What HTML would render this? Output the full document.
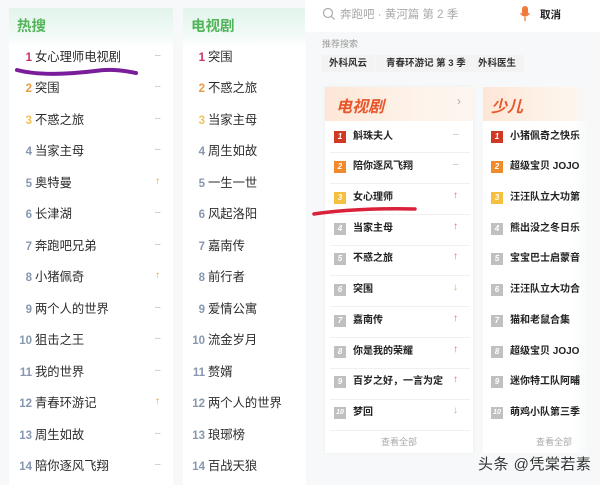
<!DOCTYPE html>
<html><head><meta charset="utf-8"><style>
*{margin:0;padding:0;box-sizing:border-box}
body{width:600px;height:485px;overflow:hidden;background:#f7f8f9;font-family:"Liberation Sans","Noto Sans CJK SC",sans-serif;position:relative}
.abs{position:absolute}
.card{position:absolute;background:#fff}
.lh{position:absolute;left:0;right:0;top:0;height:38px;background:linear-gradient(180deg,#e2f4ec,#f3faf7 75%,#fff);}
.lh span{position:absolute;left:8px;top:7px;font-size:14.5px;color:#52b45a;font-weight:bold}
.r{position:absolute;height:18px;line-height:18px;font-size:12.3px;color:#2b2b2b;white-space:nowrap}
.n{display:inline-block;width:14px;text-align:right;margin-right:3px;color:#8797b0;font-weight:bold;font-size:11.5px}
.t{position:absolute;font-size:10px;color:#bbb}
.up{color:#e0a030}
.rh{position:absolute;left:0;right:0;top:0;height:34px;background:linear-gradient(90deg,#fde6d6,#fdf3ea 60%,#fdf6ef);}
.rh span{position:absolute;left:11px;top:6px;font-size:16px;color:#e8562c;font-weight:bold;font-style:italic}
.rr{position:absolute;height:16px;line-height:16px;font-size:10px;color:#222;font-weight:bold;white-space:nowrap}
.b{position:absolute;width:12px;height:12px;top:2px;color:#fff;font-size:8px;line-height:12px;text-align:center;background:#c0c0c0}
.sep{position:absolute;height:1px;background:#f0f0f0}
.a{position:absolute;font-size:10px}
</style></head><body>

<div class="card" style="left:9px;top:8px;width:164px;height:477px">
<div class="lh"><span>热搜</span></div>
</div>
<div class="card" style="left:183px;top:8px;width:123px;height:477px">
<div class="lh"><span>电视剧</span></div>
</div>

<div class="r" style="left:18px;top:48px"><span class="n" style="color:#c8306a">1</span>女心理师电视剧</div>
<div class="r" style="left:18px;top:79px"><span class="n" style="color:#eb9a40">2</span>突围</div>
<div class="r" style="left:18px;top:111px"><span class="n" style="color:#eec257">3</span>不惑之旅</div>
<div class="r" style="left:18px;top:142px"><span class="n">4</span>当家主母</div>
<div class="r" style="left:18px;top:174px"><span class="n">5</span>奥特曼</div>
<div class="r" style="left:18px;top:205px"><span class="n">6</span>长津湖</div>
<div class="r" style="left:18px;top:237px"><span class="n">7</span>奔跑吧兄弟</div>
<div class="r" style="left:18px;top:268px"><span class="n">8</span>小猪佩奇</div>
<div class="r" style="left:18px;top:300px"><span class="n">9</span>两个人的世界</div>
<div class="r" style="left:18px;top:331px"><span class="n">10</span>狙击之王</div>
<div class="r" style="left:18px;top:363px"><span class="n">11</span>我的世界</div>
<div class="r" style="left:18px;top:394px"><span class="n">12</span>青春环游记</div>
<div class="r" style="left:18px;top:426px"><span class="n">13</span>周生如故</div>
<div class="r" style="left:18px;top:457px"><span class="n">14</span>陪你逐风飞翔</div>

<div class="t" style="left:155px;top:50px">–</div>
<div class="t" style="left:155px;top:81px">–</div>
<div class="t" style="left:155px;top:113px">–</div>
<div class="t" style="left:155px;top:144px">–</div>
<div class="t up" style="left:155px;top:176px">↑</div>
<div class="t" style="left:155px;top:207px">–</div>
<div class="t" style="left:155px;top:239px">–</div>
<div class="t up" style="left:155px;top:270px">↑</div>
<div class="t" style="left:155px;top:302px">–</div>
<div class="t" style="left:155px;top:333px">–</div>
<div class="t" style="left:155px;top:365px">–</div>
<div class="t up" style="left:155px;top:396px">↑</div>
<div class="t" style="left:155px;top:428px">–</div>
<div class="t" style="left:155px;top:459px">–</div>

<div class="r" style="left:191px;top:48px"><span class="n" style="color:#c8306a">1</span>突围</div>
<div class="r" style="left:191px;top:79px"><span class="n" style="color:#eb9a40">2</span>不惑之旅</div>
<div class="r" style="left:191px;top:111px"><span class="n" style="color:#eec257">3</span>当家主母</div>
<div class="r" style="left:191px;top:142px"><span class="n">4</span>周生如故</div>
<div class="r" style="left:191px;top:174px"><span class="n">5</span>一生一世</div>
<div class="r" style="left:191px;top:205px"><span class="n">6</span>风起洛阳</div>
<div class="r" style="left:191px;top:237px"><span class="n">7</span>嘉南传</div>
<div class="r" style="left:191px;top:268px"><span class="n">8</span>前行者</div>
<div class="r" style="left:191px;top:300px"><span class="n">9</span>爱情公寓</div>
<div class="r" style="left:191px;top:331px"><span class="n">10</span>流金岁月</div>
<div class="r" style="left:191px;top:363px"><span class="n">11</span>赘婿</div>
<div class="r" style="left:191px;top:394px"><span class="n">12</span>两个人的世界</div>
<div class="r" style="left:191px;top:426px"><span class="n">13</span>琅琊榜</div>
<div class="r" style="left:191px;top:457px"><span class="n">14</span>百战天狼</div>

<svg class="abs" style="left:0;top:0" width="310" height="100"><path d="M17 70 C40 76,70 74,95 71 C115 68,130 72,136 73" stroke="#7a1d9a" stroke-width="4" fill="none" stroke-linecap="round"/></svg>

<div class="abs" style="left:305px;top:0;width:295px;height:32px;background:#fff"></div>
<svg class="abs" style="left:322px;top:7px" width="14" height="14"><circle cx="6" cy="6" r="4.5" stroke="#aaa" stroke-width="1.2" fill="none"/><path d="M9.5 9.5 L12.5 12.5" stroke="#aaa" stroke-width="1.2"/></svg>
<div class="abs" style="left:340px;top:6px;font-size:11.5px;color:#a8a8a8">奔跑吧 · 黄河篇 第 2 季</div>
<svg class="abs" style="left:519px;top:6px" width="12" height="16"><rect x="3" y="0" width="6" height="10" rx="3" fill="#f07a3a"/><path d="M1.5 7 Q6 13 10.5 7 M6 11 V15" stroke="#f07a3a" stroke-width="1.3" fill="none"/></svg>
<div class="abs" style="left:540px;top:7px;font-size:10.5px;color:#222;font-weight:bold">取消</div>
<div class="abs" style="left:322px;top:37px;font-size:9px;color:#999">推荐搜索</div>
<div class="abs" style="left:322px;top:55px;height:17px;line-height:17px;padding:0 7px;background:#f3f3f3;font-size:9.5px;font-weight:bold;color:#333">外科风云</div>
<div class="abs" style="left:375px;top:55px;height:17px;line-height:17px;padding:0 11px;background:#f3f3f3;font-size:9.5px;font-weight:bold;color:#333">青春环游记 第 3 季</div>
<div class="abs" style="left:470px;top:55px;height:17px;line-height:17px;padding:0 8px;background:#f3f3f3;font-size:9.5px;font-weight:bold;color:#333">外科医生</div>

<div class="card" style="left:325px;top:87px;width:148px;height:366px;box-shadow:0 0 3px rgba(0,0,0,.06)">
<div class="rh"><span>电视剧</span><b style="position:absolute;right:12px;top:7px;color:#aaa;font-size:12px;font-weight:normal">›</b></div>
<div class="abs" style="left:0;right:0;bottom:0;height:22px;text-align:center;line-height:22px;font-size:9px;color:#aaa">查看全部</div>
</div>
<div class="card" style="left:483px;top:87px;width:117px;height:366px;">
<div class="rh"><span style="left:8px">少儿</span></div>
<div class="abs" style="left:0;right:0;bottom:0;height:22px;line-height:22px;padding-left:53px;font-size:9px;color:#aaa;overflow:hidden;white-space:nowrap">查看全部</div>
</div>
<div class="abs" style="left:572px;top:87px;width:28px;height:366px;background:linear-gradient(90deg,rgba(247,248,249,0),#f7f8f9 60%)"></div>

<div class="sep" style="left:330px;width:140px;top:152px"></div>
<div class="sep" style="left:330px;width:140px;top:183px"></div>
<div class="sep" style="left:330px;width:140px;top:214px"></div>
<div class="sep" style="left:330px;width:140px;top:245px"></div>
<div class="sep" style="left:330px;width:140px;top:275px"></div>
<div class="sep" style="left:330px;width:140px;top:306px"></div>
<div class="sep" style="left:330px;width:140px;top:337px"></div>
<div class="sep" style="left:330px;width:140px;top:368px"></div>
<div class="sep" style="left:330px;width:140px;top:399px"></div>
<div class="sep" style="left:330px;width:140px;top:430px"></div>

<div class="rr" style="left:334px;top:129px"><i class="b" style="background:#d03a22">1</i><span style="margin-left:19px">斛珠夫人</span></div>
<div class="rr" style="left:334px;top:159px"><i class="b" style="background:#f08a2a">2</i><span style="margin-left:19px">陪你逐风飞翔</span></div>
<div class="rr" style="left:334px;top:190px"><i class="b" style="background:#f5c040">3</i><span style="margin-left:19px">女心理师</span></div>
<div class="rr" style="left:334px;top:221px"><i class="b">4</i><span style="margin-left:19px">当家主母</span></div>
<div class="rr" style="left:334px;top:251px"><i class="b">5</i><span style="margin-left:19px">不惑之旅</span></div>
<div class="rr" style="left:334px;top:282px"><i class="b">6</i><span style="margin-left:19px">突围</span></div>
<div class="rr" style="left:334px;top:313px"><i class="b">7</i><span style="margin-left:19px">嘉南传</span></div>
<div class="rr" style="left:334px;top:344px"><i class="b">8</i><span style="margin-left:19px">你是我的荣耀</span></div>
<div class="rr" style="left:334px;top:374px"><i class="b">9</i><span style="margin-left:19px">百岁之好，一言为定</span></div>
<div class="rr" style="left:334px;top:405px"><i class="b" style="font-size:7px">10</i><span style="margin-left:19px">梦回</span></div>

<div class="a" style="left:453px;top:129px;color:#bbb">–</div>
<div class="a" style="left:453px;top:159px;color:#bbb">–</div>
<div class="a" style="left:453px;top:190px;color:#e66">↑</div>
<div class="a" style="left:453px;top:221px;color:#e66">↑</div>
<div class="a" style="left:453px;top:251px;color:#e66">↑</div>
<div class="a" style="left:453px;top:282px;color:#8c6">↓</div>
<div class="a" style="left:453px;top:313px;color:#e66">↑</div>
<div class="a" style="left:453px;top:344px;color:#e66">↑</div>
<div class="a" style="left:453px;top:374px;color:#e66">↑</div>
<div class="a" style="left:453px;top:405px;color:#8c6">↓</div>

<div class="rr" style="left:491px;top:129px"><i class="b" style="background:#d03a22">1</i><span style="margin-left:19px">小猪佩奇之快乐</span></div>
<div class="rr" style="left:491px;top:159px"><i class="b" style="background:#f08a2a">2</i><span style="margin-left:19px">超级宝贝 JOJO</span></div>
<div class="rr" style="left:491px;top:190px"><i class="b" style="background:#f5c040">3</i><span style="margin-left:19px">汪汪队立大功第</span></div>
<div class="rr" style="left:491px;top:221px"><i class="b">4</i><span style="margin-left:19px">熊出没之冬日乐</span></div>
<div class="rr" style="left:491px;top:251px"><i class="b">5</i><span style="margin-left:19px">宝宝巴士启蒙音</span></div>
<div class="rr" style="left:491px;top:282px"><i class="b">6</i><span style="margin-left:19px">汪汪队立大功合</span></div>
<div class="rr" style="left:491px;top:313px"><i class="b">7</i><span style="margin-left:19px">猫和老鼠合集</span></div>
<div class="rr" style="left:491px;top:344px"><i class="b">8</i><span style="margin-left:19px">超级宝贝 JOJO</span></div>
<div class="rr" style="left:491px;top:374px"><i class="b">9</i><span style="margin-left:19px">迷你特工队阿晡</span></div>
<div class="rr" style="left:491px;top:405px"><i class="b" style="font-size:7px">10</i><span style="margin-left:19px">萌鸡小队第三季</span></div>

<svg class="abs" style="left:310px;top:200px" width="120" height="20"><path d="M4 14 C30 10,70 8,105 9" stroke="#d9213a" stroke-width="3.5" fill="none" stroke-linecap="round"/></svg>

<div class="abs" style="left:478px;top:453px;font-size:15px;color:#333;letter-spacing:0.5px">头条 @凭棠若素</div>
</body></html>
